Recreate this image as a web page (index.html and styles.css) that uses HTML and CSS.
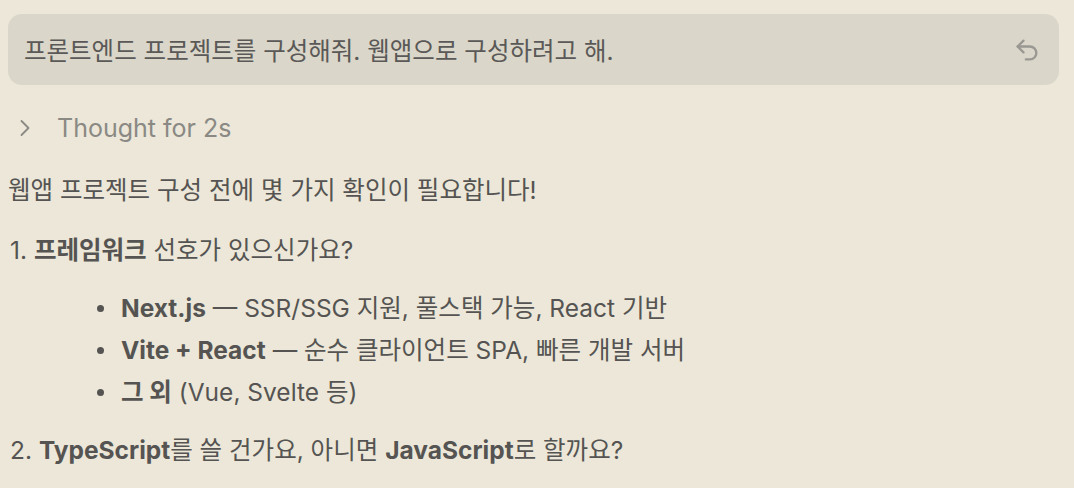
FILE: index.html
```html
<!DOCTYPE html>
<html lang="ko">
<head>
<meta charset="utf-8">
<link rel="stylesheet" href="styles.css">
</head>
<body>
<div class="page">
  <div class="bubble">
    <span class="bubble-text">프론트엔드 프로젝트를 구성해줘. 웹앱으로 구성하려고 해.</span>
    <svg class="undo" width="28" height="28" viewBox="0 0 24 24" fill="none" stroke="currentColor" stroke-width="2" stroke-linecap="round" stroke-linejoin="round"><path d="M9 14 4 9l5-5"/><path d="M4 9h10.5a5.5 5.5 0 0 1 5.5 5.5a5.5 5.5 0 0 1-5.5 5.5H11"/></svg>
  </div>
  <div class="thought">
    <svg class="chev" width="12" height="18" viewBox="0 0 12 18" fill="none" stroke="currentColor" stroke-width="1.8" stroke-linecap="round" stroke-linejoin="round"><path d="M2.5 2 9.5 9 2.5 16"/></svg>
    <span>Thought for 2s</span>
  </div>
  <div class="answer">
    <p class="intro">웹앱 프로젝트 구성 전에 몇 가지 확인이 필요합니다!</p>
    <ol class="questions">
      <li class="q">
        <div class="q-line"><b>프레임워크</b> 선호가 있으신가요?</div>
        <ul class="opts">
          <li><b>Next.js</b> — SSR/SSG 지원, 풀스택 가능, React 기반</li>
          <li><b>Vite + React</b> — 순수 클라이언트 SPA, 빠른 개발 서버</li>
          <li><b>그 외</b> (Vue, Svelte 등)</li>
        </ul>
      </li>
      <li class="q">
        <div class="q-line"><b>TypeScript</b>를 쓸 건가요, 아니면 <b>JavaScript</b>로 할까요?</div>
      </li>
    </ol>
  </div>
</div>
</body>
</html>
```

FILE: styles.css
```css
html, body {
  margin: 0;
  padding: 0;
  background: #ece7d8;
}
body {
  font-family: "Inter", "Noto Sans CJK KR", sans-serif;
  color: #555452;
  overflow: hidden;
}
.page {
  padding: 14px 15px 0 8px;
}
.bubble {
  height: 71px;
  box-sizing: border-box;
  background: #dad6c9;
  border-radius: 14px;
  display: flex;
  align-items: center;
  justify-content: space-between;
  padding: 0 18px 0 16px;
  font-size: 24.5px;
}
.bubble-text {
  color: #5a5957;
}
.undo {
  color: #9a9892;
}
.thought {
  display: flex;
  align-items: center;
  height: 30px;
  margin-top: 28px;
  padding-left: 11px;
  color: #8a8984;
  font-size: 25px;
}
.chev {
  margin-right: 26px;
}
.answer {
  font-size: 24.5px;
}
.intro {
  margin: 32px 0 0 0;
  line-height: 30px;
}
.questions {
  margin: 30px 0 0 0;
  padding: 0;
  list-style: none;
  counter-reset: q;
}
.q {
  counter-increment: q;
}
.q + .q {
  margin-top: 28px;
}
.q-line {
  line-height: 30px;
  padding-left: 2px;
}
.q-line::before {
  content: counter(q) ". ";
}
b {
  font-weight: 700;
  color: #555452;
}
.opts {
  margin: 28px 0 0 0;
  padding-left: 113px;
  list-style: none;
}
.opts li {
  line-height: 30px;
  position: relative;
}
.opts li + li {
  margin-top: 12px;
}
.opts li::before {
  content: "";
  position: absolute;
  left: -24px;
  top: 12px;
  width: 7px;
  height: 7px;
  border-radius: 50%;
  background: #555452;
}
```
